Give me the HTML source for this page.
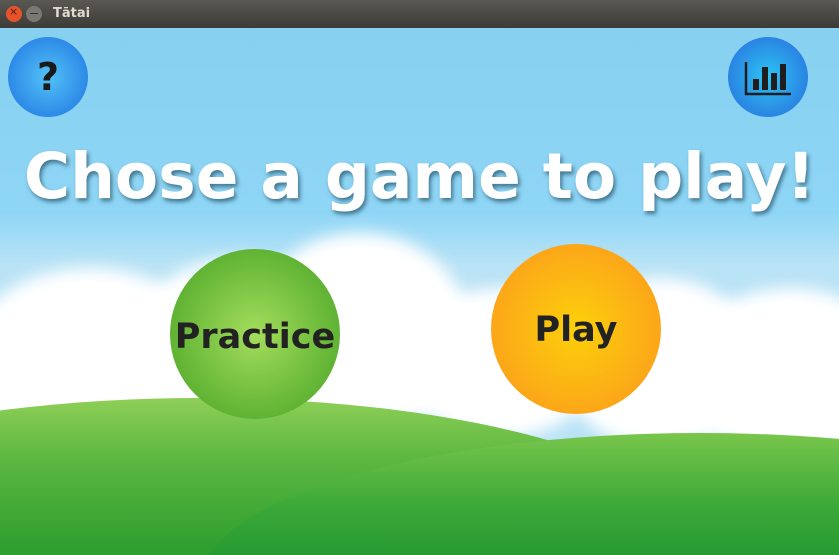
<!DOCTYPE html>
<html><head><style>
html,body{margin:0;width:839px;height:555px;overflow:hidden}
body{position:relative;font-family:"DejaVu Sans","Liberation Sans",sans-serif}
.tb{position:absolute;left:0;top:0;width:839px;height:28px;background:linear-gradient(#5a5853,#3c3b37)}
.tb .t{position:absolute;left:53px;top:6px;color:#dfdbd2;font-size:13px;font-weight:bold}
.bg{position:absolute;top:28px;left:0;width:839px;height:527px;overflow:hidden;background:linear-gradient(#87d0f0 0%,#8fd6f6 35%,#b9e3f6 45%)}
.c{position:absolute;border-radius:50%}
.cl{position:absolute;background:#fff;border-radius:50%;filter:blur(8px)}
.title{position:absolute;left:0;width:839px;top:140px;text-align:center;color:#fff;font-weight:bold;font-size:63px;white-space:nowrap;text-shadow:2px 3px 4px rgba(0,40,60,.55)}
.lbl{position:absolute;width:100%;text-align:center;font-weight:bold;color:#222}
</style></head><body>
<div class="tb"><div class="c" style="left:6px;top:6px;width:16px;height:16px;background:#e5532a"></div><div style="position:absolute;left:9px;top:5px;font-size:11px;color:#5a1a0a">×</div><div class="c" style="left:26px;top:6px;width:16px;height:16px;background:#7a7873"></div><div style="position:absolute;left:30px;top:13px;width:8px;height:1px;background:#333"></div><div class="t">Tātai</div></div>
<div class="bg">
<div class="cl" style="left:-40px;top:240px;width:260px;height:200px"></div>
<div class="cl" style="left:130px;top:230px;width:220px;height:180px"></div>
<div class="cl" style="left:250px;top:205px;width:220px;height:200px"></div>
<div class="cl" style="left:400px;top:260px;width:200px;height:150px"></div>
<div class="cl" style="left:560px;top:250px;width:200px;height:170px"></div>
<div class="cl" style="left:680px;top:260px;width:220px;height:170px"></div>
<div style="position:absolute;left:-300px;top:370px;width:1000px;height:300px;border-radius:50%;background:linear-gradient(#8fcf58,#5cb840 20%,#2f9f30 50%,#1f8e2a)"></div>
<div style="position:absolute;left:200px;top:405px;width:1000px;height:300px;border-radius:50%;background:linear-gradient(#79c64c,#3aa838 25%,#1d9230 50%)"></div>
</div>
<div class="c" style="left:8px;top:37px;width:80px;height:80px;background:radial-gradient(#53c2f7,#2a86e6 75%)"><div class="lbl" style="top:18px;font-size:38px;color:#1a1a1a">?</div></div>
<div class="c" style="left:728px;top:37px;width:80px;height:80px;background:radial-gradient(#2cc4f5,#2a7de0 78%)">
<svg width="80" height="80" style="position:absolute;left:0;top:0"><path d="M18 25V57H63" stroke="#1e1e1e" stroke-width="2.5" fill="none"/><rect x="25" y="42" width="6" height="11" fill="#1e1e1e"/><rect x="34" y="30" width="6" height="23" fill="#1e1e1e"/><rect x="43" y="36" width="6" height="17" fill="#1e1e1e"/><rect x="52" y="27" width="6" height="26" fill="#1e1e1e"/></svg></div>
<div class="title">Chose a game to play!</div>
<div class="c" style="left:170px;top:249px;width:170px;height:170px;background:radial-gradient(#a4dd5c,#57ad2e 80%)"><div class="lbl" style="top:68px;font-size:35px">Practice</div></div>
<div class="c" style="left:491px;top:244px;width:170px;height:170px;background:radial-gradient(#fdd00a,#fb9e1c 85%)"><div class="lbl" style="top:66px;font-size:35px">Play</div></div>
</body></html>
